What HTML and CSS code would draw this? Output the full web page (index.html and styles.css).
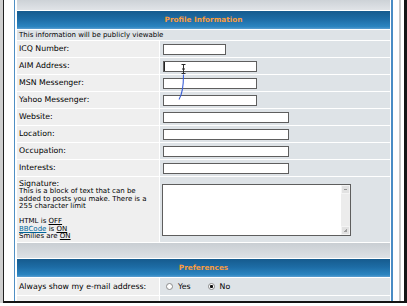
FILE: index.html
```html
<!DOCTYPE html>
<html lang="en">

<head>
    <meta charset="UTF-8">
    <meta name="viewport" content="width=device-width, initial-scale=1.0">
    <title>Profile Information</title>
    <link rel="stylesheet" href="styles.css">
</head>

<body>
    <div class="shell">
        <div class="window">
            <div class="forum">
                <div class="form">
                    <div class="cat span"></div>
                    <div class="th span">Profile Information</div>
                    <div class="row2 span intro">This information will be publicly viewable</div>

                    <div class="row1 label">ICQ Number:</div>
                    <div class="row2 field"><input type="text" class="w-s"></div>

                    <div class="row1 label">AIM Address:</div>
                    <div class="row2 field"><input type="text" class="w-m focus"></div>

                    <div class="row1 label">MSN Messenger:</div>
                    <div class="row2 field"><input type="text" class="w-m"></div>

                    <div class="row1 label">Yahoo Messenger:</div>
                    <div class="row2 field"><input type="text" class="w-m"></div>

                    <div class="row1 label">Website:</div>
                    <div class="row2 field"><input type="text" class="w-l"></div>

                    <div class="row1 label">Location:</div>
                    <div class="row2 field"><input type="text" class="w-l"></div>

                    <div class="row1 label">Occupation:</div>
                    <div class="row2 field"><input type="text" class="w-l"></div>

                    <div class="row1 label">Interests:</div>
                    <div class="row2 field"><input type="text" class="w-l"></div>

                    <div class="row1 sig">
                        <div class="sig-title">Signature:</div>
                        <div class="small">
                            This is a block of text that can be<br>
                            added to posts you make. There is a<br>
                            255 character limit<br><br>
                            HTML is <u>OFF</u><br>
                            <a href="#">BBCode</a> is <u>ON</u><br>
                            Smilies are <u>ON</u>
                        </div>
                    </div>
                    <div class="row2 field">
                        <div class="sigbox">
                            <textarea name="signature"></textarea>
                            <div class="sbar">
                                <span class="sbtn up"></span>
                                <span class="strack"></span>
                                <span class="sbtn grip"></span>
                            </div>
                        </div>
                    </div>

                    <div class="cat tall span"></div>
                    <div class="th span">Preferences</div>

                    <div class="row1 label tall">Always show my e-mail address:</div>
                    <div class="row2 field opts">
                        <label class="opt"><input type="radio" name="viewemail"> Yes</label>
                        <label class="opt"><input type="radio" name="viewemail" checked> No</label>
                    </div>

                    <!-- next row, only its top edge is in view -->
                    <div class="row1 label tall"></div>
                    <div class="row2 field opts"></div>
                </div>
            </div>
            <div class="rail"></div>
        </div>

        <!-- mouse pointer and pen mark drawn over the form -->
        <svg class="marks" width="407" height="306" viewBox="0 0 407 306">
            <path d="M181.5 64.5h4M181.5 73.5h4M183.5 64.5v9M182 69h3" stroke="#2b2b2b" stroke-width="1" fill="none" />
            <path d="M183.5 74.5C183.5 84 183 93 179 99.5" stroke="#3a5ed6" stroke-width="1.1" fill="none" />
        </svg>
    </div>
</body>

</html>
```

FILE: styles.css
```css
* {
    box-sizing: border-box;
}

body {
    margin: 0;
    background: #fff;
    font-family: "DejaVu Sans", Verdana, sans-serif;
    color: #000;
}

.shell {
    position: relative;
    width: 407px;
    border-left: 3px solid #cfcfcf;
}

.window {
    display: flex;
    height: 303px;
    overflow: hidden;
    padding-left: 10px;
    border-left: 1px solid #222;
    border-right: 3px solid #141414;
    border-bottom: 2px solid #141414;
    background: #fff;
}

.forum {
    border-left: 1px solid #4f8fc4;
    border-right: 2px solid #4a8cc4;
    padding: 0 1px 0 2px;
}

.rail {
    width: 2px;
    margin: 0 3px 0 6px;
    background: #c9c9c9;
}

.form {
    display: grid;
    grid-template-columns: 142px 230px;
    gap: 1px;
}

.span {
    grid-column: 1 / -1;
}

.row1 {
    background: #efefef;
}

.row2 {
    background: #dee3e7;
}

.cat {
    height: 10px;
    background: linear-gradient(#cdd2d7, #e0e3e7);
}

.cat.tall {
    height: 15px;
    background: linear-gradient(#c9ced3, #dde1e5);
}

.th {
    height: 18px;
    line-height: 18px;
    text-align: center;
    font-size: 7.3px;
    font-weight: bold;
    color: #f99c3f;
    background: linear-gradient(#165b8e, #1d6ca5 45%, #2b85c1 88%, #5c9ed0);
}

.intro {
    height: 10px;
    line-height: 10px;
    font-size: 7px;
    padding-left: 2px;
}

.label {
    height: 16px;
    line-height: 16px;
    font-size: 7.8px;
    padding: 0 2px;
    white-space: nowrap;
}

.label.tall {
    height: 17px;
    line-height: 17px;
}

.field {
    display: flex;
    align-items: center;
    padding-left: 3px;
}

input[type="text"] {
    height: 11px;
    padding: 0;
    border: 1px solid #5e5e5e;
    background: #fff;
}

.w-s {
    width: 63px;
}

.w-m {
    width: 94px;
}

.w-l {
    width: 126px;
}

.focus {
    box-shadow: inset 1px 0 #222;
}

.sig {
    height: 65px;
    padding: 2px 2px 0;
    white-space: nowrap;
}

.sig-title {
    font-size: 7.8px;
    line-height: 9px;
}

.small {
    font-size: 7px;
    line-height: 7.5px;
}

.small a {
    color: #006699;
}

.sigbox {
    display: flex;
    width: 189px;
    height: 52px;
    margin-left: -1px;
    border: 1px solid #5e5e5e;
    background: #fff;
}

.sigbox textarea {
    flex: 1;
    border: 0;
    padding: 0;
    resize: none;
    outline: none;
    background: #fff;
}

.sbar {
    width: 9px;
    display: flex;
    flex-direction: column;
    background: #ececec;
}

.sbtn {
    height: 9px;
    background: #e2e2e2;
    border: 1px solid #f4f4f4;
    display: flex;
    align-items: center;
    justify-content: center;
}

.sbtn.up::after {
    content: "";
    width: 3px;
    height: 1px;
    background: #9a9a9a;
}

.sbtn.grip::after {
    content: "";
    width: 3px;
    height: 3px;
    background: linear-gradient(135deg, transparent 50%, #a0a0a0 50%);
}

.strack {
    flex: 1;
}

.opts {
    gap: 14px;
}

.opt {
    display: flex;
    align-items: center;
    gap: 5px;
    font-size: 7.8px;
}

.opt input {
    appearance: none;
    width: 7px;
    height: 7px;
    margin: 0 0 0 3px;
    border: 1px solid #8a8a8a;
    border-radius: 50%;
    background: #fff;
}

.opt input:checked {
    background: radial-gradient(#111 1.3px, #fff 1.8px);
}

.marks {
    position: absolute;
    left: -3px;
    top: 0;
    pointer-events: none;
}
```
